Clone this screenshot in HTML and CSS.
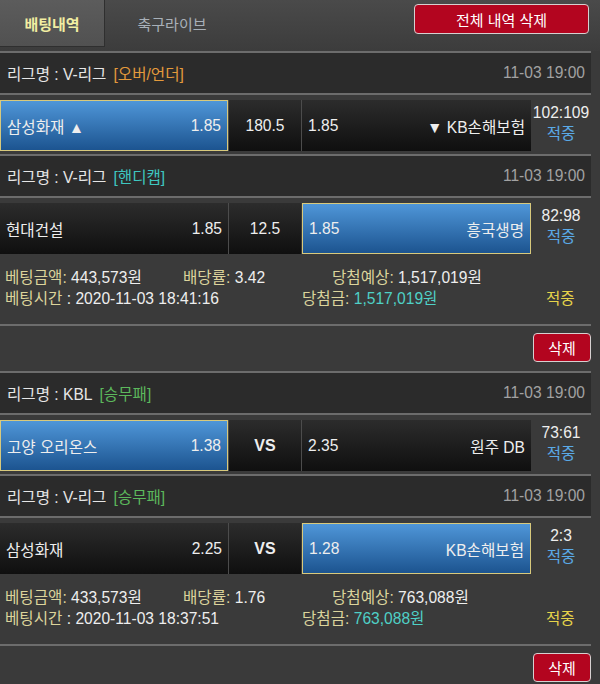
FILE: index.html
```html
<!DOCTYPE html>
<html lang="ko">
<head>
    <meta charset="UTF-8">
    <meta name="viewport" content="width=device-width, initial-scale=1.0">
    <title>배팅내역</title>
    <link rel="stylesheet" href="styles.css">
</head>
<body>
    <div class="tabs">
        <div class="tab active">배팅내역</div>
        <div class="tab">축구라이브</div>
        <button class="btn-clear">전체 내역 삭제</button>
    </div>

    <div class="list">
        <!-- slip 1 -->
        <div class="league">
            <span>리그명 : V-리그<span class="tag tag-ou">[오버/언더]</span></span>
            <span class="time">11-03 19:00</span>
        </div>
        <div class="bet-row">
            <div class="cell home pick"><span>삼성화재 ▲</span><span>1.85</span></div>
            <div class="cell mid">180.5</div>
            <div class="cell away"><span>1.85</span><span>▼ KB손해보험</span></div>
            <div class="score"><div>102:109</div><div class="hit">적중</div></div>
        </div>

        <div class="league">
            <span>리그명 : V-리그<span class="tag tag-hc">[핸디캡]</span></span>
            <span class="time">11-03 19:00</span>
        </div>
        <div class="bet-row">
            <div class="cell home"><span>현대건설</span><span>1.85</span></div>
            <div class="cell mid">12.5</div>
            <div class="cell away pick"><span>1.85</span><span>흥국생명</span></div>
            <div class="score"><div>82:98</div><div class="hit">적중</div></div>
        </div>

        <div class="summary">
            <div class="sum-line">
                <span class="c1"><span class="lbl">베팅금액:</span> 443,573원</span>
                <span class="c2"><span class="lbl">배당률:</span> 3.42</span>
                <span><span class="lbl">당첨예상:</span> 1,517,019원</span>
            </div>
            <div class="sum-line">
                <span class="c3"><span class="lbl">베팅시간</span> : 2020-11-03 18:41:16</span>
                <span class="c4"><span class="lbl">당첨금:</span> <span class="won">1,517,019원</span></span>
                <span class="result">적중</span>
            </div>
        </div>
        <div class="del-row"><button class="btn-del">삭제</button></div>

        <!-- slip 2 -->
        <div class="league">
            <span>리그명 : KBL<span class="tag tag-wdl">[승무패]</span></span>
            <span class="time">11-03 19:00</span>
        </div>
        <div class="bet-row">
            <div class="cell home pick"><span>고양 오리온스</span><span>1.38</span></div>
            <div class="cell mid vs">VS</div>
            <div class="cell away"><span>2.35</span><span>원주 DB</span></div>
            <div class="score"><div>73:61</div><div class="hit">적중</div></div>
        </div>

        <div class="league">
            <span>리그명 : V-리그<span class="tag tag-wdl">[승무패]</span></span>
            <span class="time">11-03 19:00</span>
        </div>
        <div class="bet-row">
            <div class="cell home"><span>삼성화재</span><span>2.25</span></div>
            <div class="cell mid vs">VS</div>
            <div class="cell away pick"><span>1.28</span><span>KB손해보험</span></div>
            <div class="score"><div>2:3</div><div class="hit">적중</div></div>
        </div>

        <div class="summary">
            <div class="sum-line">
                <span class="c1"><span class="lbl">베팅금액:</span> 433,573원</span>
                <span class="c2"><span class="lbl">배당률:</span> 1.76</span>
                <span><span class="lbl">당첨예상:</span> 763,088원</span>
            </div>
            <div class="sum-line">
                <span class="c3"><span class="lbl">베팅시간</span> : 2020-11-03 18:37:51</span>
                <span class="c4"><span class="lbl">당첨금:</span> <span class="won">763,088원</span></span>
                <span class="result">적중</span>
            </div>
        </div>
        <div class="del-row"><button class="btn-del">삭제</button></div>
    </div>
</body>
</html>
```

FILE: styles.css
```css
body {
    margin: 0;
    padding: 0;
    background-color: #3a3a3a;
    color: #eeeeee;
    font-family: 'Liberation Sans', 'Noto Sans CJK KR', sans-serif;
    font-size: 15.6px;
}

/* top tab bar */
.tabs {
    display: flex;
    align-items: flex-start;
    height: 51px;
    background: linear-gradient(#4a4a4a, #3c3c3c);
    font-size: 15px;
}

.tab {
    width: 134px;
    height: 46px;
    line-height: 50px;
    text-align: center;
    color: #a8b0b8;
}

.tab.active {
    width: 104px;
    background: linear-gradient(#5c5c5c, #515151);
    border-right: 1px solid #2f2f2f;
    border-bottom: 1px solid #2f2f2f;
    color: #f2eea2;
    font-weight: bold;
}

.btn-clear {
    margin: 4px 11px 0 auto;
    width: 175px;
    height: 30px;
    background-color: #b3051f;
    border: 1px solid #d6d0d0;
    border-radius: 4px;
    color: #fff;
    font-family: inherit;
    font-size: 15px;
}

/* list */
.list {
    width: 591px;
}

.league {
    display: flex;
    justify-content: space-between;
    align-items: center;
    height: 40px;
    padding: 0 6px 0 7px;
    background-color: #2b2b2b;
    border-top: 2px solid #6c6c6c;
    border-bottom: 2px solid #6c6c6c;
    color: #e6e6e6;
}

.tag {
    margin-left: 7px;
}

.tag-ou {
    color: #e49a3c;
}

.tag-hc {
    color: #3fc7c0;
}

.tag-wdl {
    color: #5cb85c;
}

.time {
    color: #a2a2a2;
}

.bet-row {
    display: flex;
    padding: 5px 0 3px;
}

.cell {
    box-sizing: border-box;
    display: flex;
    justify-content: space-between;
    align-items: center;
    height: 51px;
    padding: 0 6px;
    background: linear-gradient(#2c2c2c, #0f0f0f);
    color: #eeeeee;
}

.home {
    width: 228px;
}

.mid {
    width: 73px;
    justify-content: center;
    border-left: 1px solid #4c4c4c;
}

.away {
    width: 230px;
    border-left: 1px solid #4c4c4c;
}

.vs {
    font-weight: bold;
    font-size: 16px;
}

.pick {
    background: linear-gradient(#4f96d8, #1c5490);
    border: 1px solid #d8c97c;
}

.away.pick {
    margin-left: 1px;
    width: 229px;
}

.score {
    width: 60px;
    padding-top: 2px;
    text-align: center;
    line-height: 21px;
}

.hit {
    color: #5aa9e6;
}

/* slip summary */
.summary {
    padding: 10px 0 15px 5px;
}

.sum-line {
    display: flex;
    height: 21px;
    line-height: 21px;
}

.lbl {
    color: #dcd49c;
}

.c1 {
    width: 178px;
}

.c2 {
    width: 149px;
}

.c3 {
    width: 297px;
}

.c4 {
    width: 244px;
}

.won {
    color: #4fd0c6;
}

.result {
    color: #e6d44a;
}

.del-row {
    display: flex;
    justify-content: flex-end;
    align-items: flex-start;
    height: 45px;
    border-top: 2px solid #6c6c6c;
}

.btn-del {
    margin-top: 7px;
    width: 58px;
    height: 29px;
    background-color: #b3051f;
    border: 1px solid #d6d0d0;
    border-radius: 4px;
    color: #fff;
    font-family: inherit;
    font-size: 15px;
}
```
